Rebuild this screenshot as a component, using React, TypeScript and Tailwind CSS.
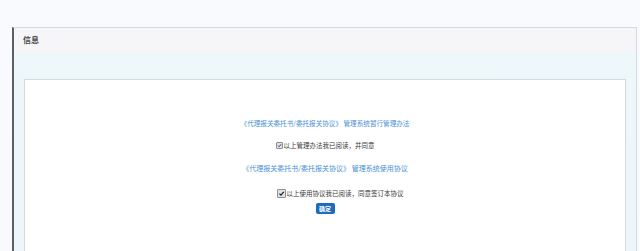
import React from "react";

const CheckBox: React.FC<{ size: string }> = ({ size }) => (
  <span
    className={`${size} inline-flex items-center justify-center border border-[#8a8f96] bg-[#dfe3e8] rounded-[1px] mr-[1px] shrink-0`}
  >
    <svg viewBox="0 0 10 10" className="w-full h-full">
      <path d="M2 5.2 L4.2 7.4 L8.2 2.6" fill="none" stroke="#222" strokeWidth="1.8" />
    </svg>
  </span>
);

const App: React.FC = () => {
  return (
    <div
      className="w-[640px] h-[251px] bg-[#f9fafd] pt-[27px] pl-[12px] pr-[3px] overflow-hidden"
      style={{ fontFamily: '"Noto Sans CJK SC", "Noto Sans", sans-serif' }}
    >
      <div className="h-[260px] border-l-2 border-l-[#5b6067] border-t border-t-[#d5d8dd] border-r border-r-[#d5d8dd] flex flex-col">
        <div className="h-[24px] bg-[#f6f5f8] flex items-center pl-[9px] text-[8px] font-bold text-[#4a4a4a]">
          信息
        </div>
        <div className="flex-1 bg-gradient-to-b from-[#eef8fb] to-[#ecf5fb] pt-[27px] pl-[10px] pr-[10px]">
          <div className="h-full bg-white border border-[#d6dade] flex flex-col items-center pt-[38px] text-[6.5px] text-[#3a3a3a]">
            <div className="text-[#4a8fd4] text-[6.6px] leading-[10px]">
              《代理报关委托书/委托报关协议》 管理系统暂行管理办法
            </div>
            <div className="mt-[12px] flex items-center leading-[10px]">
              <CheckBox size="w-[7px] h-[7px]" />
              <span>以上管理办法我已阅读，并同意</span>
            </div>
            <div className="mt-[13px] text-[#4a8fd4] text-[7px] leading-[10px]">
              《代理报关委托书/委托报关协议》 管理系统使用协议
            </div>
            <div className="mt-[15px] ml-[30px] flex items-center leading-[10px]">
              <CheckBox size="w-[9px] h-[9px]" />
              <span>以上使用协议我已阅读，同意签订本协议</span>
            </div>
            <button className="mt-[5px] w-[19px] h-[11px] rounded-[2px] bg-[#1d6cb9] text-white text-[6px] font-bold flex items-center justify-center leading-none">
              确定
            </button>
          </div>
        </div>
      </div>
    </div>
  );
};

export default App;
